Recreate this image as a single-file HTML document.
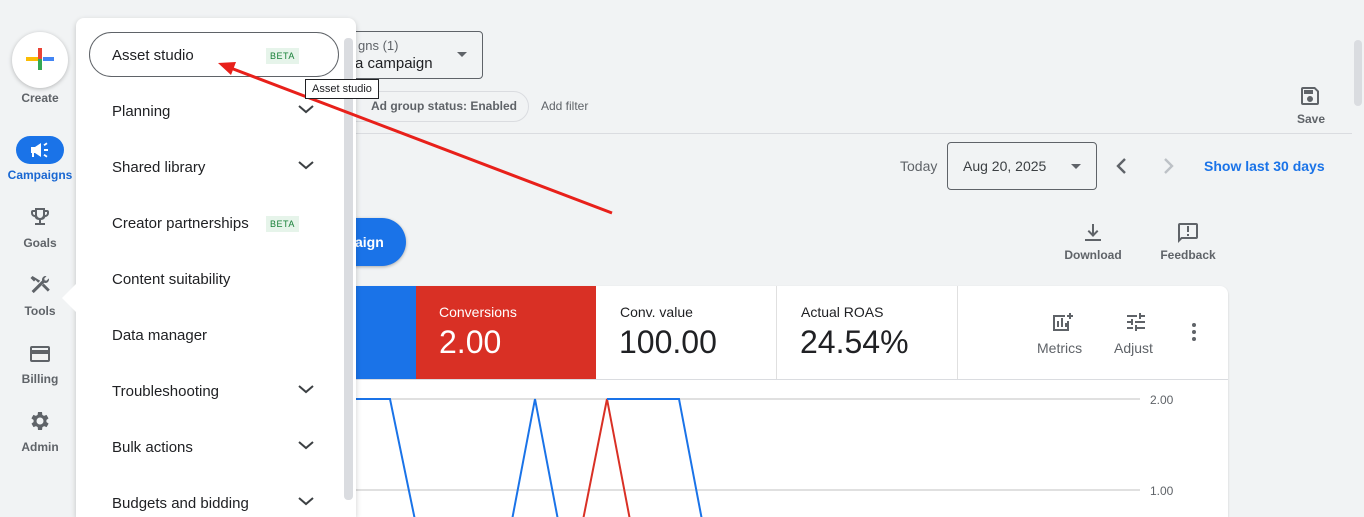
<!DOCTYPE html>
<html><head><meta charset="utf-8"><style>
*{margin:0;padding:0;box-sizing:border-box}
html{width:1364px;height:517px;overflow:hidden}
body{width:1364px;height:517px;overflow:hidden;background:#f1f3f4;font-family:"Liberation Sans",Arial,sans-serif;position:relative;color:#202124}
.a{position:absolute}
.nav{font-size:12px;color:#5f6368;text-align:center;width:80px;left:0}
.mi{position:absolute;left:112px;font-size:15px;color:#202124}
.beta{position:absolute;font-size:9px;color:#188038;background:#e6f4ea;padding:3px 4px;letter-spacing:.5px}
.sm{font-size:12px;color:#5f6368;text-align:center}
</style></head><body>
<div class="a" style="left:340px;top:31px;width:143px;height:48px;border:1px solid #5f6368;border-radius:4px"></div>
<div class="a" style="left:358px;top:38px;font-size:13px;color:#5f6368">gns (1)</div>
<div class="a" style="left:355px;top:55px;font-size:15px">a campaign</div>
<div class="a" style="left:457px;top:52px;border-left:5px solid transparent;border-right:5px solid transparent;border-top:5px solid #5f6368"></div>
<div class="a" style="left:340px;top:91px;width:189px;height:31px;border:1px solid #dadce0;border-radius:16px"></div>
<div class="a" style="left:371px;top:99px;font-size:12px;color:#5f6368;font-weight:bold">Ad group status: Enabled</div>
<div class="a" style="left:541px;top:99px;font-size:12px;color:#5f6368">Add filter</div>
<div class="a" style="left:340px;top:133px;width:1012px;height:1px;background:#dadce0"></div>
<svg class="a" style="left:1298px;top:84px" width="24" height="24" viewBox="0 0 24 24"><path fill="#5f6368" d="M17 3H5a2 2 0 0 0-2 2v14a2 2 0 0 0 2 2h14a2 2 0 0 0 2-2V7l-4-4zm2 16H5V5h11.2L19 7.8V19zM12 12a3 3 0 1 0 0 6 3 3 0 0 0 0-6zM6 6h9v4H6z"/></svg>
<div class="a sm" style="left:1292px;top:112px;width:38px;font-weight:bold">Save</div>
<div class="a" style="left:900px;top:158px;font-size:14px;color:#5f6368">Today</div>
<div class="a" style="left:947px;top:142px;width:150px;height:48px;border:1px solid #5f6368;border-radius:4px"></div>
<div class="a" style="left:963px;top:158px;font-size:14px;color:#3c4043">Aug 20, 2025</div>
<div class="a" style="left:1071px;top:164px;border-left:5px solid transparent;border-right:5px solid transparent;border-top:5px solid #5f6368"></div>
<svg class="a" style="left:1110px;top:154px" width="24" height="24" viewBox="0 0 24 24"><path d="M15 5l-7 7 7 7" stroke="#5f6368" stroke-width="2.4" fill="none"/></svg>
<svg class="a" style="left:1156px;top:154px" width="24" height="24" viewBox="0 0 24 24"><path d="M9 5l7 7-7 7" stroke="#bdc1c6" stroke-width="2.4" fill="none"/></svg>
<div class="a" style="left:1204px;top:158px;font-size:14px;color:#1a73e8;font-weight:bold">Show last 30 days</div>
<svg class="a" style="left:1081px;top:221px" width="24" height="24" viewBox="0 0 24 24"><path fill="#5f6368" d="M11 3h2v9l3-3 1.4 1.4L12 16l-5.4-5.6L8 9l3 3zM4 18h16v2H4z"/></svg>
<div class="a sm" style="left:1060px;top:248px;width:66px;font-weight:bold">Download</div>
<svg class="a" style="left:1176px;top:221px" width="24" height="24" viewBox="0 0 24 24"><path fill="#5f6368" d="M20 2H4a2 2 0 0 0-2 2v18l4-4h14a2 2 0 0 0 2-2V4a2 2 0 0 0-2-2zm0 14H5.2L4 17.2V4h16v12zM11 5h2v6h-2zm0 8h2v2h-2z"/></svg>
<div class="a sm" style="left:1156px;top:248px;width:64px;font-weight:bold">Feedback</div>
<div class="a" style="left:330px;top:218px;width:76px;height:48px;background:#1a73e8;border-radius:24px;box-shadow:0 1px 3px rgba(0,0,0,.3)"></div>
<div class="a" style="left:355px;top:234px;font-size:14px;color:#fff;font-weight:bold">aign</div>
<div class="a" style="left:340px;top:286px;width:888px;height:231px;background:#fff;border-radius:8px 8px 0 0;box-shadow:0 1px 2px rgba(0,0,0,.15);overflow:hidden">
 <div class="a" style="left:0;top:0;width:76px;height:93px;background:#1a73e8"></div>
 <div class="a" style="left:76px;top:0;width:180px;height:93px;background:#d93025"></div>
 <div class="a" style="left:99px;top:18px;font-size:14px;color:#fff">Conversions</div>
 <div class="a" style="left:99px;top:38px;font-size:32px;color:#fff">2.00</div>
 <div class="a" style="left:436px;top:0;width:1px;height:93px;background:#e0e0e0"></div>
 <div class="a" style="left:617px;top:0;width:1px;height:93px;background:#e0e0e0"></div>
 <div class="a" style="left:280px;top:18px;font-size:14px">Conv. value</div>
 <div class="a" style="left:279px;top:38px;font-size:32px">100.00</div>
 <div class="a" style="left:461px;top:18px;font-size:14px">Actual ROAS</div>
 <div class="a" style="left:460px;top:38px;font-size:32px">24.54%</div>
 <svg class="a" style="left:710px;top:24px" width="24" height="24" viewBox="0 0 24 24"><path fill="#5f6368" d="M19 3v2h-2v2h2v2h2V7h2V5h-2V3zM3 5h12v2H5v12h12v-8h2v10H3zm4 6h2v6H7zm4-3h2v9h-2zm4 5h2v4h-2z"/></svg>
 <div class="a" style="left:697px;top:54px;font-size:14px;color:#5f6368">Metrics</div>
 <svg class="a" style="left:784px;top:24px" width="24" height="24" viewBox="0 0 24 24"><path fill="#5f6368" d="M3 17v2h6v-2zM3 5v2h10V5zm10 16v-2h8v-2h-8v-2h-2v6zM7 9v2H3v2h4v2h2V9zm14 4v-2H11v2zm-6-4h2V7h4V5h-4V3h-2z"/></svg>
 <div class="a" style="left:774px;top:54px;font-size:14px;color:#5f6368">Adjust</div>
 <svg class="a" style="left:850px;top:36px" width="8" height="20"><circle cx="4" cy="3" r="2" fill="#5f6368"/><circle cx="4" cy="10" r="2" fill="#5f6368"/><circle cx="4" cy="17" r="2" fill="#5f6368"/></svg>
 <div class="a" style="left:0;top:93px;width:888px;height:1px;background:#dadce0"></div>
</div>
<svg class="a" style="left:340px;top:380px" width="888" height="137">
 <line x1="0" y1="19" x2="800" y2="19" stroke="#e0e0e0" stroke-width="2"/>
 <line x1="0" y1="110" x2="800" y2="110" stroke="#e0e0e0" stroke-width="2"/>
 <text x="810" y="24" font-size="12" fill="#5f6368" font-family="Liberation Sans">2.00</text>
 <text x="810" y="115" font-size="12" fill="#5f6368" font-family="Liberation Sans">1.00</text>
 <polyline fill="none" stroke="#1a73e8" stroke-width="2" points="0,19 50,19 75,140"/>
 <polyline fill="none" stroke="#1a73e8" stroke-width="2" points="172,140 195,19 218,140"/>
 <polyline fill="none" stroke="#d93025" stroke-width="2" points="243,140 267,19 290,140"/>
 <polyline fill="none" stroke="#1a73e8" stroke-width="2" points="267,19 339,19 362,140"/>
</svg>
<div class="a" style="left:1354px;top:40px;width:8px;height:66px;background:#dadce0;border-radius:4px"></div>
<div class="a" style="left:12px;top:32px;width:56px;height:56px;border-radius:50%;background:#fff;box-shadow:0 1px 4px rgba(0,0,0,.25)"></div>
<div class="a" style="left:38px;top:48px;width:4px;height:11px;background:#ea4335"></div>
<div class="a" style="left:43px;top:57px;width:11px;height:4px;background:#4285f4"></div>
<div class="a" style="left:38px;top:59px;width:4px;height:11px;background:#34a853"></div>
<div class="a" style="left:26px;top:57px;width:12px;height:4px;background:#fbbc04"></div>
<div class="a nav" style="top:91px;font-weight:bold">Create</div>
<div class="a" style="left:16px;top:136px;width:48px;height:28px;border-radius:14px;background:#1a73e8"></div>
<svg class="a" style="left:28px;top:138px" width="24" height="24" viewBox="0 0 24 24"><path fill="#fff" d="M3 9h4l6-4v14l-6-4H6v4H4v-4H3zM16 11h4v2h-4zM15.5 6.5l3-2 1 1.5-3 2zM15.5 17.5l3 2 1-1.5-3-2z"/></svg>
<div class="a nav" style="top:168px;color:#1967d2;font-weight:bold">Campaigns</div>
<svg class="a" style="left:28px;top:205px" width="24" height="24" viewBox="0 0 24 24"><path fill="#5f6368" d="M19 5h-2V3H7v2H5a2 2 0 0 0-2 2v1a4 4 0 0 0 3.6 4A5 5 0 0 0 11 15v3H7v2h10v-2h-4v-3a5 5 0 0 0 4.4-3A4 4 0 0 0 21 8V7a2 2 0 0 0-2-2zM5 8V7h2v3a2 2 0 0 1-2-2zm7 5a3 3 0 0 1-3-3V5h6v5a3 3 0 0 1-3 3zm7-5a2 2 0 0 1-2 2V7h2z"/></svg>
<div class="a nav" style="top:236px;font-weight:bold">Goals</div>
<svg class="a" style="left:28px;top:273px" width="24" height="24" viewBox="0 0 24 24"><path fill="#5f6368" d="M13.8 12.6l2-2 6 6-2 2zM17.5 10a3.5 3.5 0 0 0 3.3-4.6l-2.2 2.2-2-.2-.3-2 2.2-2.2A3.5 3.5 0 0 0 14 6.5c0 .4 0 .7.1 1L3.6 18l2.1 2.1L16.3 9.8c.4.1.8.2 1.2.2zM4.5 3 2.5 5l3.5 3.5 1.5-1.5 2.7 2.7 2-2z"/></svg>
<div class="a nav" style="top:304px;font-weight:bold">Tools</div>
<svg class="a" style="left:28px;top:342px" width="24" height="24" viewBox="0 0 24 24"><path fill="#5f6368" d="M20 4H4a2 2 0 0 0-2 2v12a2 2 0 0 0 2 2h16a2 2 0 0 0 2-2V6a2 2 0 0 0-2-2zm0 14H4v-6h16zm0-10H4V6h16z"/></svg>
<div class="a nav" style="top:372px;font-weight:bold">Billing</div>
<svg class="a" style="left:28px;top:409px" width="24" height="24" viewBox="0 0 24 24"><path fill="#5f6368" d="M19.4 13a7.5 7.5 0 0 0 0-2l2.1-1.6-2-3.5-2.5 1a7 7 0 0 0-1.7-1L15 3h-4l-.4 2.9a7 7 0 0 0-1.7 1l-2.5-1-2 3.5L6.6 11a7.5 7.5 0 0 0 0 2l-2.1 1.6 2 3.5 2.5-1a7 7 0 0 0 1.7 1L11 21h4l.4-2.9a7 7 0 0 0 1.7-1l2.5 1 2-3.5zM13 15.5a3.5 3.5 0 1 1 0-7 3.5 3.5 0 0 1 0 7z" transform="translate(-1 0)"/></svg>
<div class="a nav" style="top:440px;font-weight:bold">Admin</div>
<div class="a" style="left:76px;top:18px;width:280px;height:499px;background:#fff;border-radius:8px 8px 0 0;box-shadow:0 2px 6px rgba(0,0,0,.2)"></div>
<div class="a" style="left:62px;top:284px;width:0;height:0;border-top:14px solid transparent;border-bottom:14px solid transparent;border-right:14px solid #fff"></div>
<div class="a" style="left:344px;top:38px;width:9px;height:462px;background:#dadce0;border-radius:4px"></div>
<div class="a" style="left:89px;top:32px;width:250px;height:45px;border:1px solid #5f6368;border-radius:23px"></div>
<div class="mi" style="top:47px">Asset studio</div>
<div class="beta" style="left:266px;top:48px">BETA</div>
<div class="mi" style="top:103px">Planning</div>
<div class="mi" style="top:159px">Shared library</div>
<div class="mi" style="top:215px">Creator partnerships</div>
<div class="beta" style="left:266px;top:216px">BETA</div>
<div class="mi" style="top:271px">Content suitability</div>
<div class="mi" style="top:327px">Data manager</div>
<div class="mi" style="top:383px">Troubleshooting</div>
<div class="mi" style="top:439px">Bulk actions</div>
<div class="mi" style="top:495px">Budgets and bidding</div>
<svg class="a" style="left:0;top:0" width="1364" height="517">
 <g fill="none" stroke="#3c4043" stroke-width="2">
 <path d="M299 106l7 6 7-6"/><path d="M299 162l7 6 7-6"/><path d="M299 386l7 6 7-6"/><path d="M299 442l7 6 7-6"/><path d="M299 498l7 6 7-6"/>
 </g>
 <line x1="612" y1="213" x2="228" y2="67" stroke="#e8201a" stroke-width="3"/>
 <polygon points="218,63 236,62 231,75" fill="#e8201a"/>
</svg>
<div class="a" style="left:305px;top:79px;border:1px solid #202124;background:#fff;font-size:11px;padding:3px 6px;color:#202124">Asset studio</div>
</body></html>
